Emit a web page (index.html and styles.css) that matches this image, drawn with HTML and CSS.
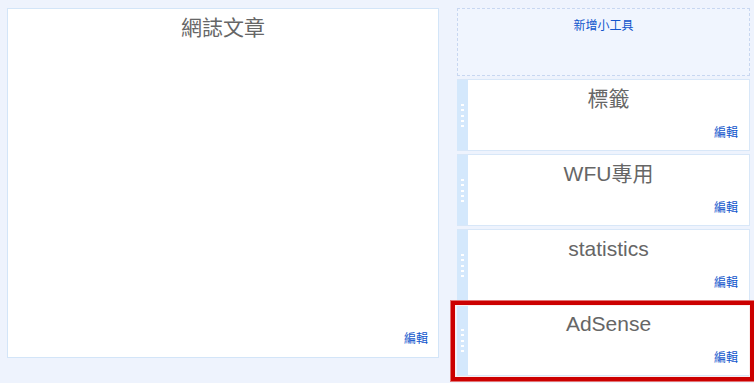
FILE: index.html
```html
<!DOCTYPE html>
<html lang="zh-Hant">
<head>
    <meta charset="UTF-8">
    <meta name="viewport" content="width=device-width, initial-scale=1.0">
    <title>版面配置</title>
    <link rel="stylesheet" href="styles.css">
</head>
<body>
    <div class="layout">
        <div class="main">
            <div class="title">網誌文章</div>
            <a href="#" class="edit">編輯</a>
        </div>
        <div class="sidebar">
            <a href="#" class="add-widget">新增小工具</a>
            <div class="widget">
                <div class="handle"><span class="dots"></span></div>
                <div class="body">
                    <div class="title">標籤</div>
                    <a href="#" class="edit">編輯</a>
                </div>
            </div>
            <div class="widget">
                <div class="handle"><span class="dots"></span></div>
                <div class="body">
                    <div class="title">WFU專用</div>
                    <a href="#" class="edit">編輯</a>
                </div>
            </div>
            <div class="widget">
                <div class="handle"><span class="dots"></span></div>
                <div class="body">
                    <div class="title">statistics</div>
                    <a href="#" class="edit">編輯</a>
                </div>
            </div>
            <div class="widget selected">
                <div class="handle"><span class="dots"></span></div>
                <div class="body">
                    <div class="title">AdSense</div>
                    <a href="#" class="edit">編輯</a>
                </div>
            </div>
        </div>
    </div>
</body>
</html>
```

FILE: styles.css
```css
body {
    margin: 0;
    min-height: 383px;
    background-color: #eef3fd;
    font-family: "Liberation Sans", Arial, "Noto Sans CJK TC", sans-serif;
}
.layout {
    display: flex;
    align-items: flex-start;
    gap: 18px;
    padding: 8px 0 0 7px;
}
.title {
    font-size: 21px;
    line-height: 24px;
    color: #666;
    text-align: center;
}
.edit {
    align-self: flex-end;
    margin-top: auto;
    font-size: 12px;
    line-height: 15px;
    color: #1155cc;
    text-decoration: none;
}
.edit:hover {
    text-decoration: underline;
}

/* main column */
.main {
    width: 432px;
    height: 350px;
    box-sizing: border-box;
    display: flex;
    flex-direction: column;
    padding: 7px 10px 10px;
    background-color: #fff;
    border: 1px solid #d3e5f8;
}

/* sidebar */
.sidebar {
    width: 293px;
    display: flex;
    flex-direction: column;
    gap: 3px;
}
.add-widget {
    display: block;
    height: 68px;
    box-sizing: border-box;
    padding-top: 10px;
    text-align: center;
    font-size: 12px;
    line-height: 15px;
    color: #1155cc;
    text-decoration: none;
    background-color: #f0f5fe;
    border: 1px dashed #c8d7f1;
}
.widget {
    position: relative;
    display: flex;
    height: 72px;
    box-sizing: border-box;
    border: 1px solid #d8e7f8;
    border-left: none;
    background-color: #fff;
}
.widget .handle {
    width: 11px;
    display: flex;
    align-items: center;
    justify-content: center;
    background-color: #d4e8fc;
}
.widget .dots {
    display: block;
    width: 3px;
    height: 23px;
    background: repeating-linear-gradient(#fff 0 2px, transparent 2px 5.3px);
}
.widget .body {
    flex: 1;
    display: flex;
    flex-direction: column;
    padding: 7px 11px 9px;
}
.widget.selected::after {
    content: "";
    position: absolute;
    top: -4px;
    left: -6px;
    right: -5px;
    bottom: -6px;
    border: 4px solid #cc0000;
    box-shadow: 0 0 0 1px #e27575, inset 0 0 0 1px #fbeeee;
    pointer-events: none;
}
```
